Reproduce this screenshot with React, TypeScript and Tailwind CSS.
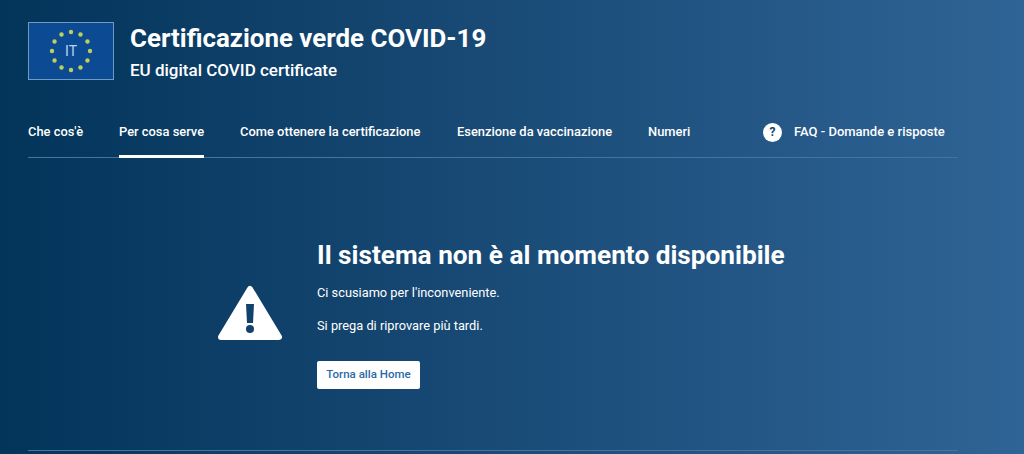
import React from 'react';

const navItems = [
  { label: "Che cos'è", width: 'w-[91px]' },
  { label: 'Per cosa serve', width: 'w-[121px]', active: true },
  { label: 'Come ottenere la certificazione', width: 'w-[217px]' },
  { label: 'Esenzione da vaccinazione', width: 'w-[191px]' },
  { label: 'Numeri', width: 'w-[115px]' },
];

const stars = Array.from({ length: 12 }, (_, i) => {
  const angle = (i * Math.PI) / 6;
  return { x: 42.5 + 19 * Math.cos(angle), y: 28.5 + 19 * Math.sin(angle) };
});

const EuFlag: React.FC = () => (
  <div className="h-[58px] w-[86px] shrink-0 border border-[#6f9cc4] bg-[#0d4a94]">
    <svg width="84" height="56" viewBox="0 0 84 56">
      {stars.map((s, i) => (
        <circle key={i} cx={s.x - 0.5} cy={s.y - 0.5} r="2.2" fill="#bcd05a" />
      ))}
      <text x="42" y="33" textAnchor="middle" fontSize="14" fill="#b9d4ee" fontFamily="Roboto, sans-serif">
        IT
      </text>
    </svg>
  </div>
);

const WarningIcon: React.FC = () => (
  <svg width="64" height="56" viewBox="0 0 64 56" className="shrink-0">
    <polygon points="32,4 61,52 3,52" fill="#ffffff" stroke="#ffffff" strokeWidth="6" strokeLinejoin="round" />
    <path d="M28 19h8l-1 19h-6z" fill="#12416c" />
    <circle cx="32" cy="44" r="4" fill="#12416c" />
  </svg>
);

export default function App() {
  return (
    <div className="h-[454px] w-[1024px] overflow-hidden bg-gradient-to-r from-[#03345a] to-[#2f6496] font-['Roboto',sans-serif] text-white">
      <div className="ml-[28px] w-[930px]">
        <header className="flex items-start gap-[16px] pt-[22px]">
          <EuFlag />
          <div className="-mt-[1px]">
            <h1 className="text-[25.9px] leading-[34px] font-bold">Certificazione verde COVID-19</h1>
            <p className="mt-[3px] text-[17px] leading-[24px] font-medium">EU digital COVID certificate</p>
          </div>
        </header>

        <nav className="mt-[29px] flex h-[47px] items-stretch border-b border-[#47739c]">
          {navItems.map((item) => (
            <div key={item.label} className={`${item.width} shrink-0`}>
              <a className={`inline-block h-[47px] pt-[12px] text-[12.9px] leading-[18px] font-medium ${item.active ? 'border-b-[3px] border-white' : ''}`}>
                {item.label}
              </a>
            </div>
          ))}
          <div className="flex h-[42px] items-center">
            <span className="flex h-[19px] w-[19px] items-center justify-center rounded-full bg-white text-[12px] font-bold text-[#12416c]">
              ?
            </span>
            <span className="ml-[12px] text-[13px] leading-[18px] font-medium">FAQ - Domande e risposte</span>
          </div>
        </nav>

        <main className="mt-[82px] flex items-start pl-[190px]">
          <div className="mt-[45px] w-[99px] shrink-0">
            <WarningIcon />
          </div>
          <div>
            <h2 className="text-[26.2px] leading-[30px] font-bold">Il sistema non è al momento disponibile</h2>
            <p className="mt-[14px] text-[12.8px] leading-[18px]">Ci scusiamo per l'inconveniente.</p>
            <p className="mt-[15px] text-[12.8px] leading-[18px]">Si prega di riprovare più tardi.</p>
            <button className="mt-[26px] h-[28px] w-[103px] rounded-[2px] bg-white text-[11.5px] font-medium text-[#2a6aa8]">
              Torna alla Home
            </button>
          </div>
        </main>

        <div className="mt-[61px] border-t border-[#47739c]" />
      </div>
    </div>
  );
}
